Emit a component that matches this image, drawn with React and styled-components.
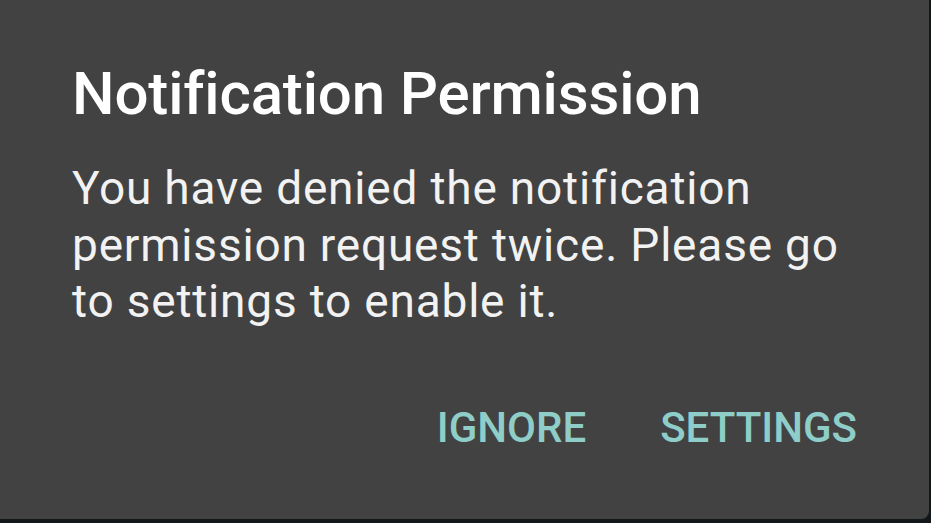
import React from 'react'
import styled, { createGlobalStyle } from 'styled-components'

const Global = createGlobalStyle`
  html, body {
    margin: 0;
    padding: 0;
    background: #12171a;
  }
  body {
    font-family: Roboto, 'Liberation Sans', sans-serif;
  }
`

const Screen = styled.div`
  width: 931px;
  height: 523px;
  overflow: hidden;
  background: #12171a;
`

const Dialog = styled.div`
  width: 929px;
  height: 519px;
  box-sizing: border-box;
  background: #424242;
  border-radius: 0 0 8px 0;
  padding: 59px 72px 0 72px;
  display: flex;
  flex-direction: column;
`

const Title = styled.h1`
  margin: 0;
  font-size: 60px;
  line-height: 70px;
  font-weight: 500;
  letter-spacing: -0.15px;
  color: #ffffff;
`

const Message = styled.p`
  margin: 31px 0 0 0;
  font-size: 46px;
  line-height: 56.5px;
  font-weight: 400;
  letter-spacing: 0.8px;
  color: #f2f2f2;
`

const Actions = styled.div`
  margin-top: 73px;
  display: flex;
  justify-content: flex-end;
  gap: 74px;
`

const Action = styled.button`
  border: none;
  background: none;
  padding: 0;
  font-family: Roboto, 'Liberation Sans', sans-serif;
  font-size: 42px;
  line-height: 50px;
  font-weight: 500;
  text-transform: uppercase;
  color: #8ecdc8;
`

const App = () => {
  return (
    <Screen>
      <Global />
      <Dialog>
        <Title>Notification Permission</Title>
        <Message>
          You have denied the notification
          <br />
          permission request twice. Please go
          <br />
          to settings to enable it.
        </Message>
        <Actions>
          <Action>Ignore</Action>
          <Action>Settings</Action>
        </Actions>
      </Dialog>
    </Screen>
  )
}

export default App
